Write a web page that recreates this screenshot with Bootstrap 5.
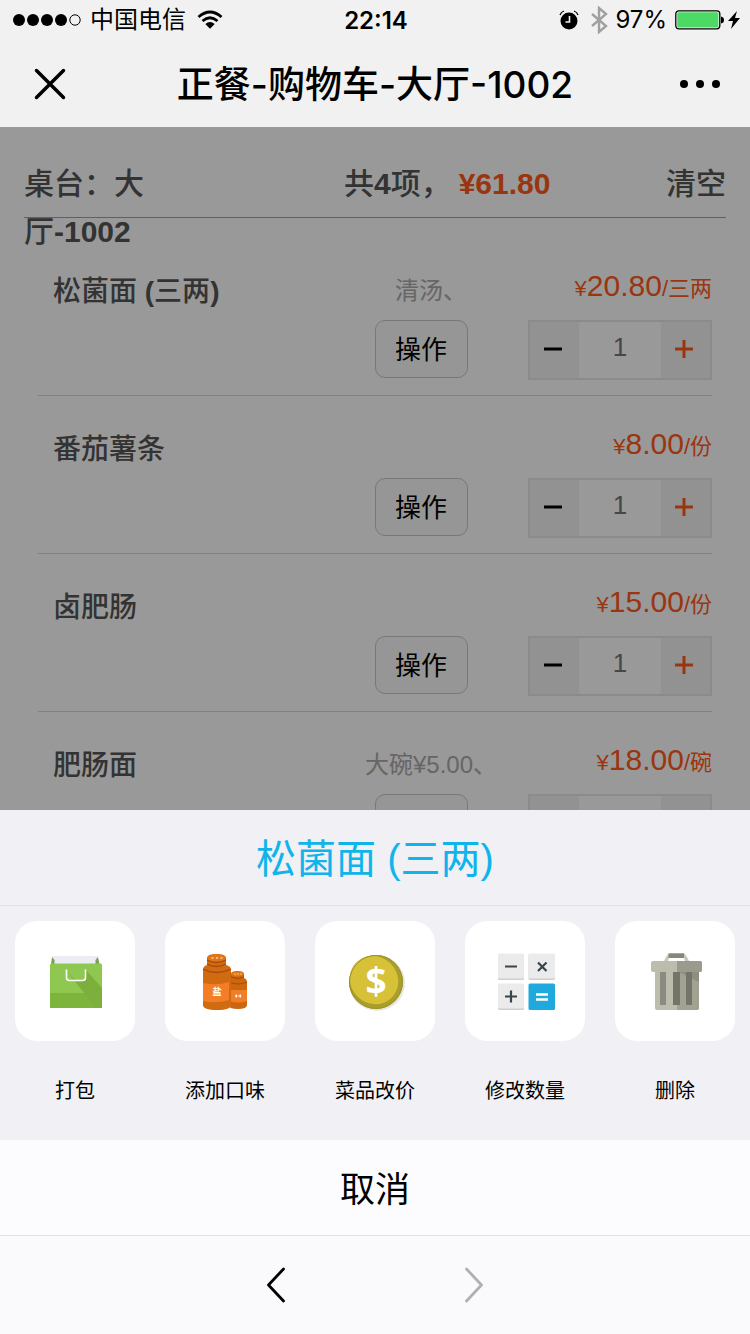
<!DOCTYPE html>
<html lang="zh-CN">
<head>
<meta charset="utf-8">
<meta name="viewport" content="width=device-width, initial-scale=1">
<title>正餐-购物车-大厅-1002</title>
<link href="https://cdn.jsdelivr.net/npm/bootstrap@5.3.0/dist/css/bootstrap.min.css" rel="stylesheet">
<style>
  :root { --orange: #ff5a1a; --page: "Liberation Sans", "Noto Sans CJK SC", sans-serif; --system: Inter, "Noto Sans CJK SC", sans-serif; }
  body { font-family: var(--page); color: #555; background: #fff; }
  button { font-family: inherit; }
  svg { display: block; }
  .chrome { background: #f1f1f1; color: #000; font-family: var(--system); }
  .status { height: 40px; padding: 0 10px 0 12px; font-size: 24px; line-height: 42px; }
  .status-side { flex: 1 1 0; }
  .titlebar { height: 87px; padding: 0 28px; }
  .titlebar h1 { font-size: 37px; line-height: 48px; font-weight: 500; padding-top: 2px; }
  .plain { background: none; border: 0; padding: 0; color: inherit; }
  .cart { min-height: 0; }
  .summary { margin: 0 24px 20px; height: 91px; padding-top: 33px; border-bottom: 1px solid #a0a0a0; font-size: 30px; line-height: 48px; font-weight: 500; }
  .summary button { font-weight: 500; }
  .summary-table { width: 140px; }
  .summary-count { margin-left: 180px; }
  .money { color: var(--orange); }
  .dishes { margin: 0 38px; }
  .dish { display: grid; grid-template-columns: 1fr 194px 184px; grid-template-rows: 48px 60px; row-gap: 10px; padding: 24px 0 15px; border-bottom: 1px solid #d5d5d5; line-height: 48px; }
  .dish-name { padding-left: 15px; font-size: 28px; line-height: 60px; font-weight: 500; margin: 0; }
  .flavour { font-size: 24px; line-height: 58px; color: #aaa; text-align: center; }
  .dish-price { font-size: 30px; line-height: 48px; color: var(--orange); text-align: right; white-space: nowrap; }
  .dish-price small { font-size: 22px; }
  .operate { grid-column: 2; justify-self: center; margin-right: 20px; width: 93px; height: 58px; border: 1px solid #c8c8c8; border-radius: 10px; background: #fafafa; color: #000; font-size: 26px; padding: 2px 0 0; }
  .stepper { height: 60px; border: 2px solid #e8e8e8; background: #f4f4f4; }
  .stepper button { flex: 0 0 49px; display: flex; align-items: center; justify-content: center; color: #000; padding: 0 3px 2px 0; }
  .stepper .more { color: var(--orange); }
  .stepper input { flex: 1; min-width: 0; border: 0; border-radius: 0; background: #fff; color: #777; font-size: 26px; text-align: center; padding: 0 0 6px; }
  .dimmer { background: rgba(0, 0, 0, .4); }
  .sheet { background: #f0f0f5; color: #000; }
  .sheet h2 { font-size: 40px; line-height: 91px; padding-top: 4px; font-weight: 400; color: #0fb4ea; border-bottom: 1px solid #e0e0e5; }
  .action { flex: 1 1 0; padding: 15px 15px 26px; color: #000; font-size: 20px; line-height: 30px; }
  .tile { height: 120px; border-radius: 22px; background: #fff; margin-bottom: 35px; }
  .action-list { height: 234px; }
  .cancel { background: #fcfcff; font-size: 35px; line-height: 91px; padding-top: 4px; border-bottom: 1px solid #dfdfe3; color: #000; }
  .pager { height: 98px; background: #fafafd; gap: 180px; }
</style>
</head>
<body>
<div class="d-flex flex-column vh-100 overflow-hidden">
  <header class="chrome flex-shrink-0">
    <div class="status d-flex">
      <div class="status-side d-flex align-items-center">
        <svg width="70" height="16" viewBox="0 0 70 16"><circle cx="7" cy="8" r="6"/><circle cx="21" cy="8" r="6"/><circle cx="35" cy="8" r="6"/><circle cx="49" cy="8" r="6"/><circle cx="63" cy="8" r="5.2" fill="none" stroke="#000"/></svg>
        <span class="ms-2">中国电信</span>
        <svg class="ms-2" width="36" height="20" viewBox="-3 0 36 20"><g fill="none" stroke="#000" stroke-width="2.800"><path d="M1.500 7Q13-3 24.500 7"/><path d="M5.500 11Q13 4.500 20.500 11"/></g><path d="M8.300 14Q13 9.800 17.700 14L13 18.800z"/></svg>
      </div>
      <time class="fw-semibold">22:14</time>
      <div class="status-side d-flex align-items-center justify-content-end">
        <svg width="20" height="20" viewBox="0 0 20 20"><circle cx="10" cy="11" r="8.500"/><path d="M1 5Q2 2 5 1M19 5Q18 2 15 1" fill="none" stroke="#000" stroke-width="1.300"/><path d="M10.500 6v6H6.500" fill="none" stroke="#f1f1f1" stroke-width="1.600"/></svg>
        <svg class="ms-2 me-1" width="24" height="28" viewBox="0 0 24 28"><path d="M5 8l14 12-7 6V2l7 6L5 20" fill="none" stroke="#a0a0a0" stroke-width="2.400"/></svg>
        <span>97%</span>
        <svg class="ms-2" width="49" height="20" viewBox="0 0 49 20"><rect x=".8" y=".8" width="44" height="18" rx="3" fill="#fff" stroke="#000" stroke-width="1.300"/><rect x="2.200" y="2.200" width="41.200" height="15.200" rx="1.500" fill="#4cd964"/><path d="M46 6.500q3 .5 3 3.500t-3 3.500z"/></svg>
        <svg class="ms-1" width="12" height="20" viewBox="0 0 12 20"><path d="M9 1L0 11h5L3 19l9-11H7z"/></svg>
      </div>
    </div>
    <div class="titlebar d-flex align-items-center justify-content-between">
      <button class="plain" aria-label="关闭"><svg width="44" height="44" viewBox="0 0 44 44"><path d="M8.500 8.500l27 27m0-27l-27 27" stroke="#000" stroke-width="3.500" stroke-linecap="round"/></svg></button>
      <h1 class="m-0">正餐-购物车-大厅-1002</h1>
      <button class="plain" aria-label="更多"><svg width="44" height="44" viewBox="0 0 44 44"><circle cx="6" cy="22" r="4"/><circle cx="22" cy="22" r="4"/><circle cx="38" cy="22" r="4"/></svg></button>
    </div>
  </header>

  <main class="cart position-relative flex-grow-1 overflow-hidden">
    <div class="summary d-flex align-items-start">
      <div class="summary-table"><span>桌台：大</span><span>厅</span><b>-1002</b></div>
      <div class="summary-count">共<b>4</b>项，<b class="money ms-2">¥61.80</b></div>
      <button class="plain ms-auto">清空</button>
    </div>
    <div class="dishes">
      <section class="dish">
        <h3 class="dish-name">松菌面 <b>(</b>三两<b>)</b></h3><div class="flavour">清汤、</div>
        <div class="dish-price"><small>¥</small>20.80<small>/三两</small></div>
        <button class="operate">操作</button>
        <div class="stepper d-flex"><button class="plain" aria-label="减少"><svg width="18" height="18"><path d="M0 9h18" stroke="currentColor" stroke-width="3"/></svg></button><input aria-label="松菌面数量" value="1"><button class="plain more" aria-label="增加"><svg width="18" height="18"><path d="M0 9h18M9 0v18" stroke="currentColor" stroke-width="3"/></svg></button></div>
      </section>
      <section class="dish">
        <h3 class="dish-name">番茄薯条</h3><div class="flavour"></div>
        <div class="dish-price"><small>¥</small>8.00<small>/份</small></div>
        <button class="operate">操作</button>
        <div class="stepper d-flex"><button class="plain" aria-label="减少"><svg width="18" height="18"><path d="M0 9h18" stroke="currentColor" stroke-width="3"/></svg></button><input aria-label="番茄薯条数量" value="1"><button class="plain more" aria-label="增加"><svg width="18" height="18"><path d="M0 9h18M9 0v18" stroke="currentColor" stroke-width="3"/></svg></button></div>
      </section>
      <section class="dish">
        <h3 class="dish-name">卤肥肠</h3><div class="flavour"></div>
        <div class="dish-price"><small>¥</small>15.00<small>/份</small></div>
        <button class="operate">操作</button>
        <div class="stepper d-flex"><button class="plain" aria-label="减少"><svg width="18" height="18"><path d="M0 9h18" stroke="currentColor" stroke-width="3"/></svg></button><input aria-label="卤肥肠数量" value="1"><button class="plain more" aria-label="增加"><svg width="18" height="18"><path d="M0 9h18M9 0v18" stroke="currentColor" stroke-width="3"/></svg></button></div>
      </section>
      <section class="dish">
        <h3 class="dish-name">肥肠面</h3><div class="flavour">大碗¥5.00、</div>
        <div class="dish-price"><small>¥</small>18.00<small>/碗</small></div>
        <button class="operate" aria-label="操作"></button>
        <div class="stepper d-flex"><button class="plain" aria-label="减少"></button><input aria-label="肥肠面数量"><button class="plain more" aria-label="增加"></button></div>
      </section>
    </div>
    <div class="dimmer position-absolute top-0 start-0 w-100 h-100"></div>
  </main>

  <section class="sheet flex-shrink-0" aria-label="菜品操作">
    <h2 class="m-0 text-center">松菌面 (三两)</h2>
    <div class="action-list d-flex align-items-start">
      <button class="plain action"><span class="tile d-flex align-items-center justify-content-center">
        <svg width="60" height="60" viewBox="1 0 60 60"><path d="M8 5h46v8H8z" fill="#ececf3"/><path d="M8 6l2.500 3v4H7zM54 6l-2.500 3v4h4z" fill="#7da057"/><rect x="6" y="12.500" width="52" height="44.500" rx="1.500" fill="#8fc850"/><path d="M6 42h52v14q0 1-1 1H7q-1 0-1-1z" fill="#7db43c"/><path d="M22 19L52 57h5q1 0 1-1V37L42 19v11H32z" fill="#7caf3b"/><path d="M22.500 18.500v8q0 3 3 3h13q3 0 3-3v-8" fill="none" stroke="#fff" stroke-width="1.600"/></svg></span>打包</button>
      <button class="plain action"><span class="tile d-flex align-items-center justify-content-center">
        <svg width="60" height="60" viewBox="-3 -2 60 60"><path d="M30 29q0-3 3-4v-4q0-3 6.500-3t6.500 3v4q3 1 3 4v23q0 4-9 4t-10-4z" fill="#cc660f"/><path d="M31 37h18v11q-9 3-18 0z" fill="#f27d28"/><ellipse cx="39.500" cy="21" rx="6" ry="2.600" fill="#e1781b"/><path d="M33 24q7 3 13 0M31 29q9 4 18 0" fill="none" stroke="#a9480c"/><path d="M5 17q0-4 4-5V5q0-4 9.500-4T28 5v7q5 1 5 5v35q0 5-14 5T5 52z" fill="#d06b11"/><path d="M5 30q14 3 26-1v18q-12 4-26 1z" fill="#f47e28"/><ellipse cx="18.500" cy="5" rx="9" ry="3.800" fill="#e07619"/><path d="M9 7q9 5 19 0M9 11q9 5 19 0M5 16q13 7 28 0" fill="none" stroke="#aa4b0d" stroke-width="1.300"/><path d="M13.500 5h2m2.500 0h2m2.500 0h2M36.500 21h1m2 0h1m2 0h1" stroke="#ffd1a0" stroke-width="1.300"/><text x="19" y="42" font-size="9" font-weight="700" fill="#fff" text-anchor="middle">盐</text><path d="M37 43h2.500m.8 0h3m-5-1.500v3m4-3v3" stroke="#fff" stroke-width="1.200"/></svg></span>添加口味</button>
      <button class="plain action"><span class="tile d-flex align-items-center justify-content-center">
        <svg width="60" height="60" viewBox="0 0 60 60"><circle cx="32" cy="32" r="28" fill="#e7e7e2"/><circle cx="31" cy="31" r="27" fill="#a99e2c"/><ellipse cx="29" cy="29" rx="23.500" ry="25" fill="#d6c137" transform="rotate(-45 29 29)"/><circle cx="31" cy="31" r="26.500" fill="none" stroke="#9d9226"/><text x="31" y="44" font-family="Noto Sans" font-size="37" font-weight="700" fill="#fff" text-anchor="middle">$</text></svg></span>菜品改价</button>
      <button class="plain action"><span class="tile d-flex align-items-center justify-content-center">
        <svg width="60" height="60" viewBox="0 0 60 60"><g fill="#cfcfcf"><rect x="3" y="3" width="26" height="26" rx="1.500"/><rect x="33.500" y="3" width="26.500" height="26" rx="1.500"/><rect x="3" y="33" width="26" height="26" rx="1.500"/></g><g fill="#ebebeb"><rect x="3" y="2.500" width="26" height="25" rx="1.500"/><rect x="33.500" y="2.500" width="26.500" height="25" rx="1.500"/><rect x="3" y="32.500" width="26" height="25" rx="1.500"/></g><rect x="33.500" y="32.500" width="26.500" height="26.500" rx="1.500" fill="#20a9dc"/><path d="M10 15.500h12M10 45.500h12M16 39.500v12M43 11.500l8.500 8.500m0-8.500L43 20" fill="none" stroke="#37454f" stroke-width="2.200"/><path d="M41 43.500h12M41 48.500h12" stroke="#fff" stroke-width="2.400"/></svg></span>修改数量</button>
      <button class="plain action"><span class="tile d-flex align-items-center justify-content-center">
        <svg width="60" height="60" viewBox="1 0 60 60"><path d="M20 10l2-4 3-4h15l3 4 2 4h-4l-1-3H25l-1 3z" fill="#c7c8bd"/><path d="M24.500 2.500h15.500v4.500H24.500z" fill="#868679"/><rect x="11" y="18" width="44" height="41" rx="2" fill="#bdbdae"/><path d="M33 18h22v39q0 2-2 2H33z" fill="#a2a293"/><path d="M33 20h22v11z" fill="#8d8d80"/><path d="M16 21h6v33h-6z" fill="#8b8b7f"/><path d="M29 21h7v33h-7zM42 21h6v33h-6z" fill="#747469"/><rect x="7" y="10" width="51" height="11" rx="2" fill="#bdbdae"/><path d="M33 10h23q2 0 2 2v7q0 2-2 2H33z" fill="#9b9b8d"/></svg></span>删除</button>
    </div>
    <button class="plain cancel d-block w-100 border-bottom">取消</button>
  </section>
  <nav class="pager d-flex align-items-center justify-content-center flex-shrink-0" aria-label="页面导航">
    <button class="plain" aria-label="后退"><svg width="18" height="36" viewBox="0 0 18 36"><path d="M16.500 2L1.500 18l15 16" fill="none" stroke="#000" stroke-width="2.800" stroke-linecap="round" stroke-linejoin="round"/></svg></button>
    <button class="plain" aria-label="前进"><svg width="18" height="36" viewBox="0 0 18 36"><path d="M1.500 2l15 16-15 16" fill="none" stroke="#b0b0b2" stroke-width="2.800" stroke-linecap="round" stroke-linejoin="round"/></svg></button>
  </nav>
</div>
<script src="https://cdn.jsdelivr.net/npm/bootstrap@5.3.0/dist/js/bootstrap.bundle.min.js"></script>
</body>
</html>
